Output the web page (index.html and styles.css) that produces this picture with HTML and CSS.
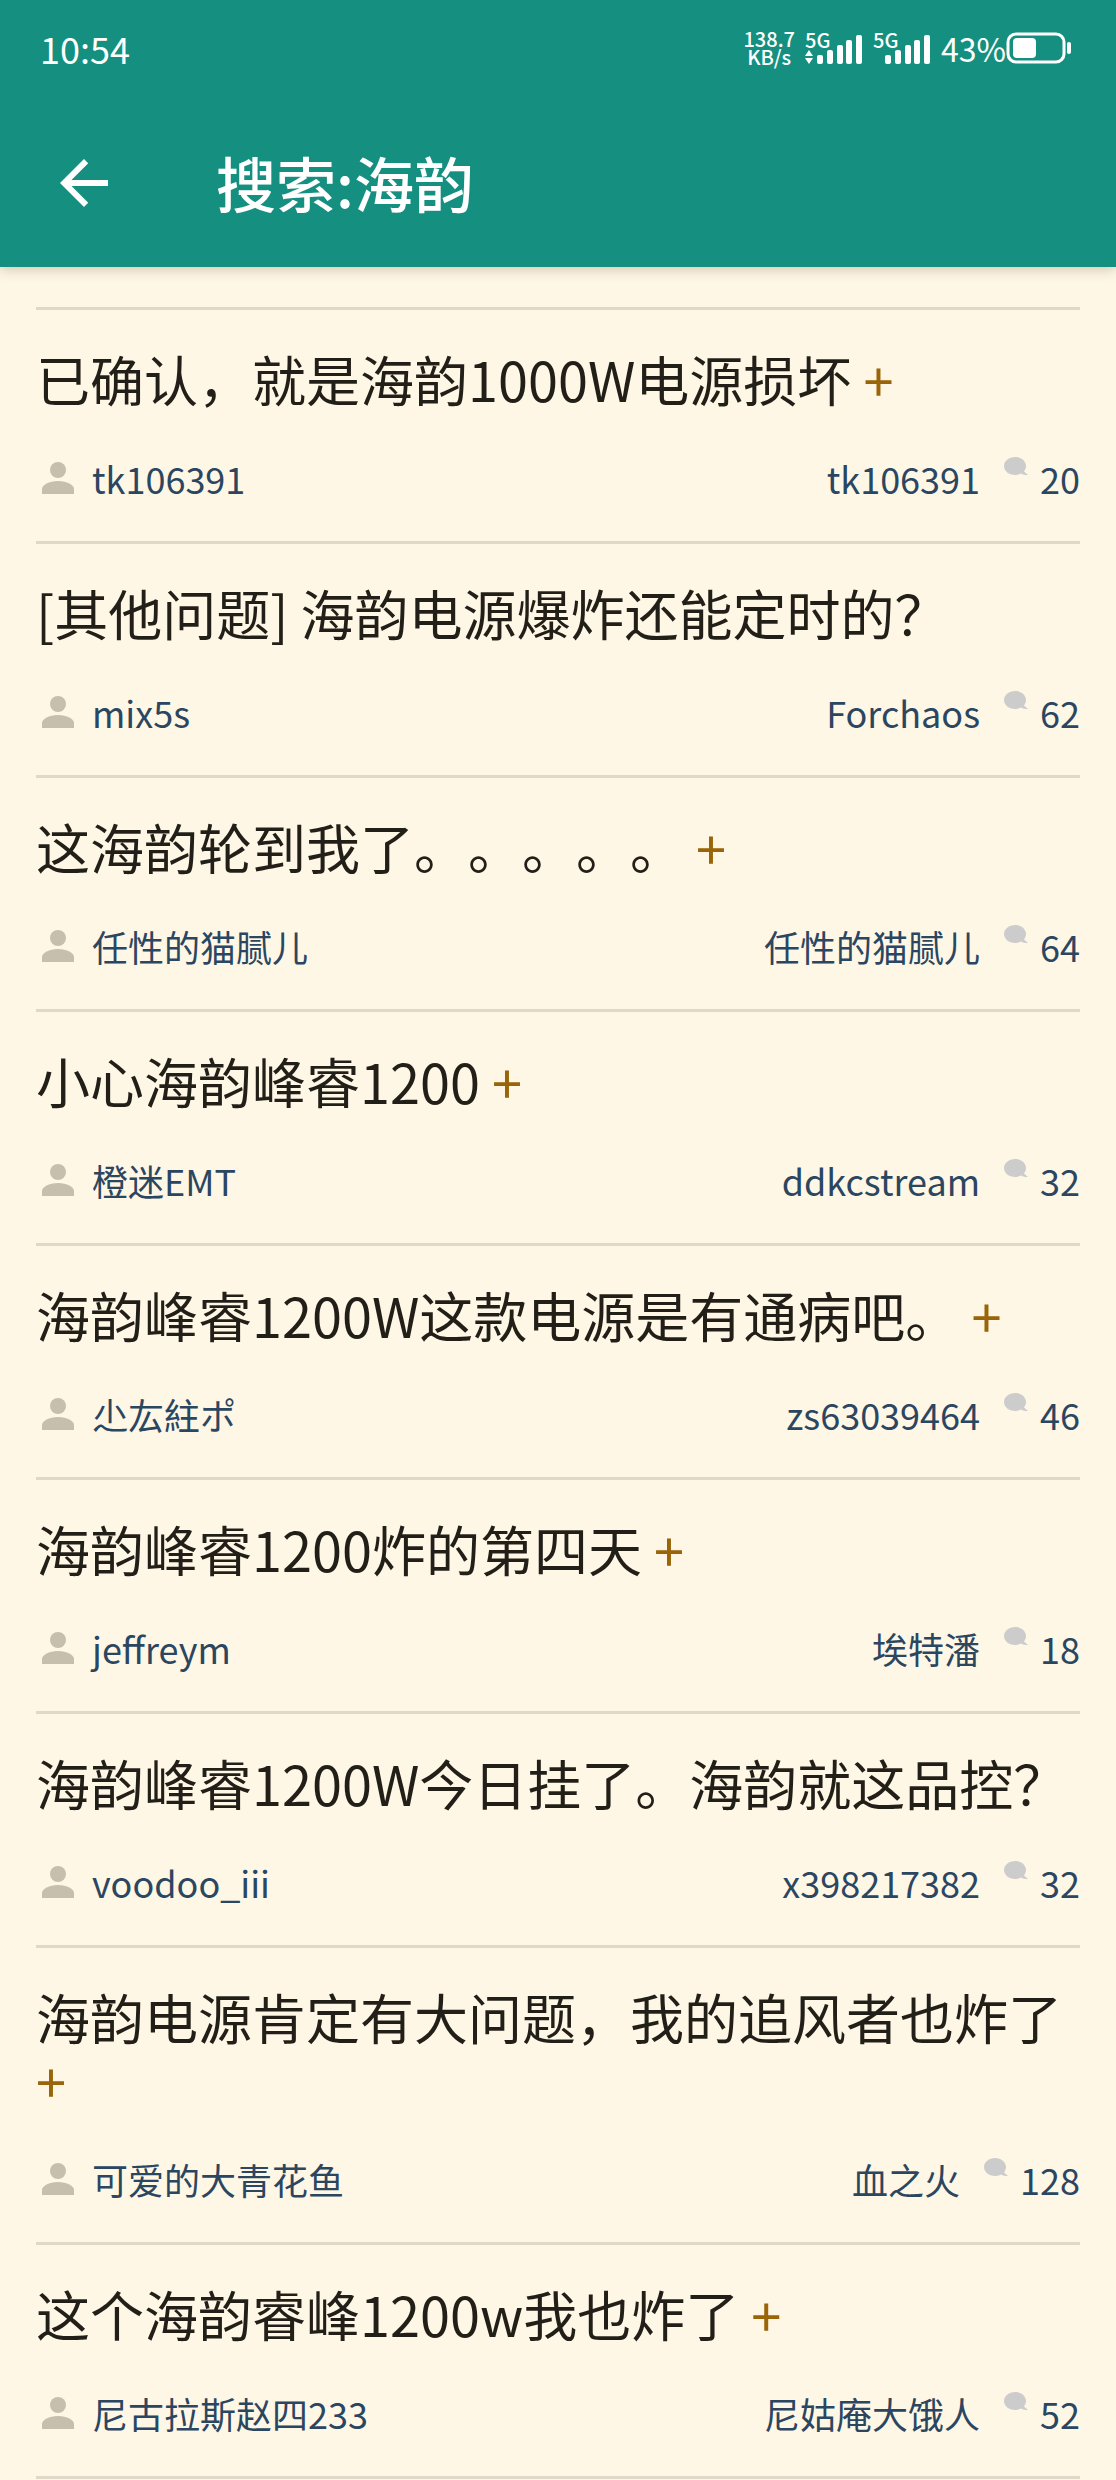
FILE: index.html
```html
<!DOCTYPE html>
<html lang="zh-CN">
<head>
<meta charset="utf-8">
<meta name="viewport" content="width=device-width, initial-scale=1">
<title>搜索:海韵</title>
<link rel="stylesheet" href="styles.css">
</head>
<body>
<svg class="defs" aria-hidden="true">
  <symbol id="person" viewBox="0 0 32 32">
    <ellipse cx="16" cy="8" rx="8" ry="8"/>
    <path d="M0 32v-5c0-4 7-8 16-8s16 4 16 8v5z"/>
  </symbol>
  <symbol id="bubble" viewBox="0 0 24 18">
    <path d="M11 0c6 0 11 4 11 9 0 2-1 4-2 5.500l4 3.500c-3 0-5-.300-7-1.500-2 1-4 1.500-6 1.500C5 18 0 14 0 9s5-9 11-9z"/>
  </symbol>
  <symbol id="bars" viewBox="0 0 46 30">
    <rect x="0" y="21" width="6" height="9" rx="2"/>
    <rect x="10" y="16" width="6" height="14" rx="2"/>
    <rect x="20" y="11" width="6" height="19" rx="2"/>
    <rect x="29" y="6" width="6" height="24" rx="2"/>
    <rect x="39" y="1" width="6" height="29" rx="2"/>
  </symbol>
</svg>
<header class="header">
  <div class="status">
    <time class="clock">10:54</time>
    <div class="indicators">
      <div class="speed"><span>138.7</span><span>KB/s</span></div>
      <div class="signal">
        <svg class="bars"><use href="#bars"/></svg>
        <span class="network">5G</span>
        <svg class="traffic" viewBox="0 0 8 14"><path d="M0 6l4-6 4 6zM0 8h8l-4 6z"/></svg>
      </div>
      <div class="signal">
        <svg class="bars"><use href="#bars"/></svg>
        <span class="network">5G</span>
      </div>
      <span class="percent">43%</span>
      <svg class="battery" viewBox="0 0 66 32">
        <rect class="shell" x="2" y="2" width="56" height="28" rx="8"/>
        <rect x="7" y="6" width="23" height="20" rx="4"/>
        <rect x="61" y="10" width="4" height="12" rx="2"/>
      </svg>
    </div>
  </div>
  <div class="toolbar">
    <button class="back" type="button" aria-label="返回">
      <svg viewBox="0 0 24 24"><path d="M20 11H7.830l5.590-5.590L12 4l-8 8 8 8 1.410-1.410L7.830 13H20v-2z"/></svg>
    </button>
    <h1 class="heading">搜索:海韵</h1>
  </div>
</header>
<main class="topics">
  <article class="topic">
    <h2 class="title"><a href="#">已确认，就是海韵1000W电源损坏</a> <a class="more" href="#">+</a></h2>
    <div class="meta">
      <svg class="person"><use href="#person"/></svg><a class="author" href="#">tk106391</a>
      <a class="replier" href="#">tk106391</a><svg class="bubble"><use href="#bubble"/></svg><span>20</span>
    </div>
  </article>
  <article class="topic">
    <h2 class="title"><a href="#">[其他问题] 海韵电源爆炸还能定时的？</a></h2>
    <div class="meta">
      <svg class="person"><use href="#person"/></svg><a class="author" href="#">mix5s</a>
      <a class="replier" href="#">Forchaos</a><svg class="bubble"><use href="#bubble"/></svg><span>62</span>
    </div>
  </article>
  <article class="topic">
    <h2 class="title"><a href="#">这海韵轮到我了。。。。。</a> <a class="more" href="#">+</a></h2>
    <div class="meta">
      <svg class="person"><use href="#person"/></svg><a class="author" href="#">任性的猫腻儿</a>
      <a class="replier" href="#">任性的猫腻儿</a><svg class="bubble"><use href="#bubble"/></svg><span>64</span>
    </div>
  </article>
  <article class="topic">
    <h2 class="title"><a href="#">小心海韵峰睿1200</a> <a class="more" href="#">+</a></h2>
    <div class="meta">
      <svg class="person"><use href="#person"/></svg><a class="author" href="#">橙迷EMT</a>
      <a class="replier" href="#">ddkcstream</a><svg class="bubble"><use href="#bubble"/></svg><span>32</span>
    </div>
  </article>
  <article class="topic">
    <h2 class="title"><a href="#">海韵峰睿1200W这款电源是有通病吧。</a> <a class="more" href="#">+</a></h2>
    <div class="meta">
      <svg class="person"><use href="#person"/></svg><a class="author" href="#">尐厷紸ポ</a>
      <a class="replier" href="#">zs63039464</a><svg class="bubble"><use href="#bubble"/></svg><span>46</span>
    </div>
  </article>
  <article class="topic">
    <h2 class="title"><a href="#">海韵峰睿1200炸的第四天</a> <a class="more" href="#">+</a></h2>
    <div class="meta">
      <svg class="person"><use href="#person"/></svg><a class="author" href="#">jeffreym</a>
      <a class="replier" href="#">埃特潘</a><svg class="bubble"><use href="#bubble"/></svg><span>18</span>
    </div>
  </article>
  <article class="topic">
    <h2 class="title"><a href="#">海韵峰睿1200W今日挂了。海韵就这品控？</a></h2>
    <div class="meta">
      <svg class="person"><use href="#person"/></svg><a class="author" href="#">voodoo_iii</a>
      <a class="replier" href="#">x398217382</a><svg class="bubble"><use href="#bubble"/></svg><span>32</span>
    </div>
  </article>
  <article class="topic">
    <h2 class="title"><a href="#">海韵电源肯定有大问题，我的追风者也炸了</a> <a class="more" href="#">+</a></h2>
    <div class="meta">
      <svg class="person"><use href="#person"/></svg><a class="author" href="#">可爱的大青花鱼</a>
      <a class="replier" href="#">血之火</a><svg class="bubble"><use href="#bubble"/></svg><span>128</span>
    </div>
  </article>
  <article class="topic">
    <h2 class="title"><a href="#">这个海韵睿峰1200w我也炸了</a> <a class="more" href="#">+</a></h2>
    <div class="meta">
      <svg class="person"><use href="#person"/></svg><a class="author" href="#">尼古拉斯赵四233</a>
      <a class="replier" href="#">尼姑庵大饿人</a><svg class="bubble"><use href="#bubble"/></svg><span>52</span>
    </div>
  </article>
</main>
</body>
</html>
```
FILE: styles.css
```css
* {
  box-sizing: border-box;
}

body {
  margin: 0;
  background: #fff7e6;
  color: #221f18;
  font-family: "Noto Sans CJK SC", "Noto Sans CJK JP", sans-serif;
  text-spacing-trim: space-all;
}

a {
  color: inherit;
  text-decoration: none;
}

svg {
  display: block;
  flex: none;
  fill: currentColor;
}

.defs {
  position: absolute;
  width: 0;
  height: 0;
}

.header {
  background: #158f80;
  color: #fff;
  box-shadow: 0 2px 12px rgba(60, 40, 0, 0.25);
}

.status {
  display: flex;
  align-items: center;
  justify-content: space-between;
  height: 96px;
  padding: 0 44px 0 40px;
}

.clock {
  font-size: 36px;
  line-height: 48px;
}

.indicators {
  display: flex;
  align-items: center;
}

.speed {
  display: flex;
  flex-direction: column;
  align-items: center;
  margin-right: 10px;
  font-size: 20px;
  font-weight: 500;
  line-height: 18px;
}

.signal {
  position: relative;
  width: 58px;
  height: 32px;
  margin-right: 10px;
}

.bars {
  width: 46px;
  height: 30px;
  margin: 2px 0 0 12px;
}

.network {
  position: absolute;
  top: -2px;
  left: 0;
  font-size: 20px;
  font-weight: 500;
  line-height: 20px;
}

.traffic {
  position: absolute;
  bottom: 0;
  left: 0;
  width: 8px;
  height: 14px;
}

.percent {
  font-size: 32px;
  line-height: 48px;
}

.battery {
  width: 66px;
  height: 32px;
}

.shell {
  fill: none;
  stroke: currentColor;
  stroke-width: 3px;
}

.toolbar {
  display: flex;
  align-items: center;
  gap: 96px;
  height: 171px;
  padding: 3px 48px 0;
}

.back {
  padding: 0;
  border: 0;
  background: none;
  color: inherit;
}

.back svg {
  width: 72px;
  height: 72px;
}

.heading {
  margin: 0;
  padding-bottom: 3px;
  font-size: 60px;
  font-weight: 500;
  line-height: 72px;
}

.topics {
  margin: 40px 36px 1px;
  border-top: 3px solid #e0d8c8;
}

.topic {
  padding: 37px 0 36px;
  border-bottom: 3px solid #e0d8c8;
}

.title {
  margin: 0 0 41px;
  font-size: 54px;
  font-weight: 400;
  line-height: 63px;
}

.more {
  color: #9a6508;
}

.meta {
  display: flex;
  align-items: center;
  color: #2b4660;
  font-size: 36px;
  line-height: 54px;
}

.person {
  width: 32px;
  height: 32px;
  margin: 0 18px 0 6px;
  color: #c6bfae;
}

.author {
  margin-right: auto;
}

.bubble {
  align-self: flex-start;
  width: 24px;
  height: 18px;
  margin: 6px 12px 0 24px;
  color: #ccc;
}
```
